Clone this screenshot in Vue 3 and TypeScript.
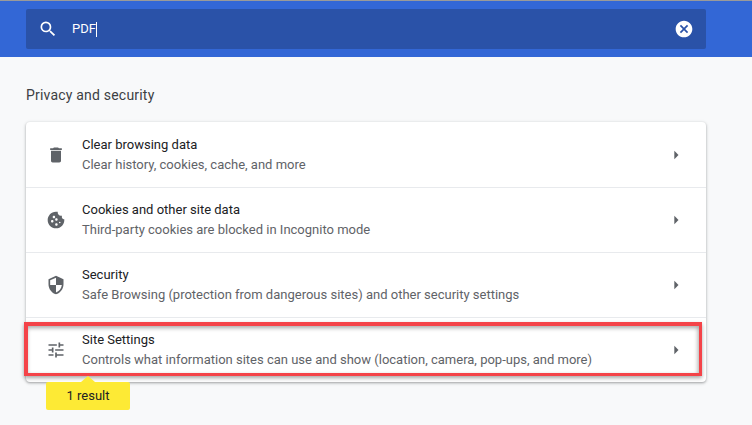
<script setup lang="ts">
interface Row {
  title: string
  sub: string
  icon: string
}

const rows: Row[] = [
  {
    title: 'Clear browsing data',
    sub: 'Clear history, cookies, cache, and more',
    icon: 'M6 19c0 1.1.9 2 2 2h8c1.1 0 2-.9 2-2V7H6v12zM19 4h-3.5l-1-1h-5l-1 1H5v2h14V4z',
  },
  {
    title: 'Cookies and other site data',
    sub: 'Third-party cookies are blocked in Incognito mode',
    icon: 'M21.95 10.99c-1.79-.03-3.7-1.95-2.68-4.22-2.97 1-5.78-1.59-5.19-4.56C7.1.74 2 6.41 2 12c0 5.52 4.48 10 10 10 5.89 0 10.54-5.08 9.95-11.01zM7.5 15c-.83 0-1.5-.67-1.5-1.5S6.67 12 7.5 12s1.5.67 1.5 1.5S8.33 15 7.5 15zm2-5C8.67 10 8 9.33 8 8.5S8.67 7 9.5 7s1.5.67 1.5 1.5-.67 1.5-1.5 1.5zm3 9c-.83 0-1.5-.67-1.5-1.5s.67-1.5 1.5-1.5 1.5.67 1.5 1.5-.67 1.5-1.5 1.5zm0-6c-.83 0-1.5-.67-1.5-1.5s.67-1.5 1.5-1.5 1.5.67 1.5 1.5-.67 1.5-1.5 1.5zm4 3c-.55 0-1-.45-1-1s.45-1 1-1 1 .45 1 1-.45 1-1 1z',
  },
  {
    title: 'Security',
    sub: 'Safe Browsing (protection from dangerous sites) and other security settings',
    icon: 'M12 1L3 5v6c0 5.55 3.84 10.74 9 12 5.16-1.26 9-6.45 9-12V5l-9-4zm0 10.99h7c-.53 4.12-3.28 7.79-7 8.94V12H5V6.3l7-3.11v8.8z',
  },
  {
    title: 'Site Settings',
    sub: 'Controls what information sites can use and show (location, camera, pop-ups, and more)',
    icon: 'M3 17v2h6v-2H3zM3 5v2h10V5H3zm10 16v-2h8v-2h-8v-2h-2v6h2zM7 9v2H3v2h4v2h2V9H7zm14 4v-2H11v2h10zm-6-4h2V7h4V5h-4V3h-2v6z',
  },
]
</script>

<template>
  <div class="page">
    <header class="header">
      <div class="search">
        <svg class="search-icon" viewBox="0 0 24 24">
          <path d="M15.5 14h-.79l-.28-.27A6.47 6.47 0 0 0 16 9.5 6.5 6.5 0 1 0 9.5 16c1.61 0 3.09-.59 4.23-1.57l.27.28v.79l5 4.99L20.49 19l-4.99-5zm-6 0C7.01 14 5 11.99 5 9.5S7.01 5 9.5 5 14 7.01 14 9.5 11.99 14 9.5 14z" />
        </svg>
        <span class="query">PDF</span><span class="caret"></span>
        <svg class="clear-icon" viewBox="0 0 24 24">
          <path d="M12 2C6.47 2 2 6.47 2 12s4.47 10 10 10 10-4.47 10-10S17.53 2 12 2zm5 13.59L15.59 17 12 13.41 8.41 17 7 15.59 10.59 12 7 8.41 8.41 7 12 10.59 15.59 7 17 8.41 13.41 12 17 15.59z" />
        </svg>
      </div>
    </header>

    <main class="content">
      <h2 class="section-title">Privacy and security</h2>
      <section class="card">
        <div v-for="row in rows" :key="row.title" class="row">
          <svg class="row-icon" viewBox="0 0 24 24"><path :d="row.icon" /></svg>
          <div class="row-text">
            <div class="row-title">{{ row.title }}</div>
            <div class="row-sub">{{ row.sub }}</div>
          </div>
          <svg class="arrow" viewBox="0 0 24 24"><path d="M10 7l5 5-5 5z" /></svg>
        </div>
        <div class="highlight"></div>
        <div class="bubble">1 result</div>
      </section>
    </main>
  </div>
</template>

<style>
html,
body {
  margin: 0;
  background: #f8f9fa;
}
</style>

<style scoped>
.page {
  width: 752px;
  height: 425px;
  overflow: hidden;
  background: #f8f9fa;
  font-family: Roboto, "Liberation Sans", sans-serif;
}

.header {
  box-sizing: border-box;
  height: 57px;
  padding: 8px 46px 0 26px;
  background: #3367d6;
  border-top: 1px solid #9a9a9a;
}

.search {
  display: flex;
  align-items: center;
  height: 40px;
  padding: 0 12px 0 12px;
  background: #2a52a8;
  border-radius: 2px;
  color: #fff;
}

.search-icon {
  width: 20px;
  height: 20px;
  fill: #fff;
}

.query {
  margin-left: 14px;
  font-size: 13px;
  line-height: 20px;
}

.caret {
  width: 1px;
  height: 15px;
  background: #fff;
}

.clear-icon {
  width: 20px;
  height: 20px;
  margin-left: auto;
  fill: #fff;
}

.content {
  padding: 0 46px 0 26px;
}

.section-title {
  margin: 0;
  padding-top: 28px;
  font-size: 14px;
  font-weight: 400;
  line-height: 20px;
  letter-spacing: 0.2px;
  color: #3c4043;
}

.card {
  position: relative;
  margin-top: 17px;
  background: #fff;
  border-radius: 4px;
  box-shadow: 0 1px 2px rgba(60, 64, 67, 0.3), 0 1px 3px 1px rgba(60, 64, 67, 0.15);
}

.row {
  box-sizing: border-box;
  display: flex;
  align-items: center;
  height: 65px;
  padding: 0 20px;
  border-top: 1px solid #e8eaed;
}

.row:first-child {
  border-top: none;
}

.row-icon {
  flex: none;
  width: 20px;
  height: 20px;
  fill: #5f6368;
}

.row-text {
  flex: 1;
  margin-left: 16px;
  font-size: 13px;
  line-height: 20px;
}

.row-title {
  color: #202124;
}

.row-sub {
  color: #5f6368;
}

.arrow {
  flex: none;
  width: 20px;
  height: 20px;
  fill: #5f6368;
}

.highlight {
  position: absolute;
  left: -2px;
  right: 4px;
  bottom: 6px;
  height: 47px;
  border-style: solid;
  border-color: #f44348;
  border-width: 4px 3px 3px 4px;
  box-shadow: 0 2px 4px rgba(0, 0, 0, 0.35), inset -1px 2px 4px rgba(0, 0, 0, 0.35);
}

.bubble {
  position: absolute;
  left: 20px;
  top: 100%;
  box-sizing: border-box;
  width: 84px;
  height: 28px;
  background: #fdea35;
  border-radius: 2px;
  font-size: 13px;
  line-height: 28px;
  text-align: center;
  color: #202124;
}

.bubble::before {
  content: "";
  position: absolute;
  left: 35px;
  top: -6px;
  width: 0;
  height: 0;
  border-left: 7px solid transparent;
  border-right: 7px solid transparent;
  border-bottom: 6px solid #fdea35;
}
</style>
